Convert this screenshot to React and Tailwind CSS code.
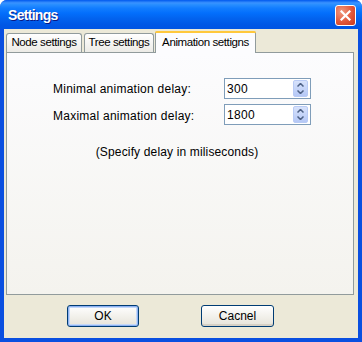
import React from "react";

function Spin() {
  return (
    <div className="w-[15px] h-[17px] rounded-[2px] border border-[#B9CBF5] bg-gradient-to-b from-[#D7E2FB] to-[#B5C8F6] flex flex-col items-center justify-center gap-[3px]">
      <svg width="7" height="4" viewBox="0 0 7 4"><path d="M0.5 3.5 L3.5 0.5 L6.5 3.5" fill="none" stroke="#4D6185" strokeWidth="1.5" /></svg>
      <svg width="7" height="4" viewBox="0 0 7 4"><path d="M0.5 0.5 L3.5 3.5 L6.5 0.5" fill="none" stroke="#4D6185" strokeWidth="1.5" /></svg>
    </div>
  );
}

function NumInput({ value }) {
  return (
    <div className="h-[21px] w-[87px] border border-[#7F9DB9] bg-white flex items-center justify-between pl-[2px] pr-[2px]">
      <span className="text-[12px] text-black leading-none tracking-[0.3px]">{value}</span>
      <Spin />
    </div>
  );
}

const tabBase =
  "h-[19px] border border-b-0 border-[#919B9C] rounded-t-[3px] bg-gradient-to-b from-white to-[#ECEBE6] flex items-center justify-center whitespace-nowrap text-[11.5px] tracking-[-0.4px]";

export default function App() {
  return (
    <div className="w-[362px] h-[342px] flex flex-col rounded-t-[7px] overflow-hidden bg-[#0A4FE0]" style={{ fontFamily: '"Liberation Sans", Arial, sans-serif' }}>
      {/* Title bar */}
      <div className="h-[29px] flex items-center justify-between pl-[8px] pr-[6px] bg-[linear-gradient(to_bottom,#0058EE_0%,#3A93FF_10%,#288EFF_16%,#127DFF_28%,#036FFC_45%,#0262EE_65%,#0057E5_85%,#0054E3_100%)]">
        <span className="text-white font-bold text-[14px] tracking-[-0.7px] [text-shadow:1px_1px_0_#0A1883] mt-[1px]">Settings</span>
        <div className="w-[21px] h-[21px] rounded-[3px] border border-white bg-[radial-gradient(circle_at_30%_30%,#F09A80_0%,#E2573A_55%,#C8381B_100%)] flex items-center justify-center mt-[2px]">
          <svg width="11" height="11" viewBox="0 0 11 11"><path d="M1.5 1.5 L9.5 9.5 M9.5 1.5 L1.5 9.5" stroke="white" strokeWidth="2.2" strokeLinecap="square" /></svg>
        </div>
      </div>
      {/* Body */}
      <div className="flex-1 mx-[4px] mb-[4px] bg-[#ECE9D8] flex flex-col pt-[2px] text-[12px] text-black">
        {/* Tabs */}
        <div className="flex items-end h-[21px] ml-[2px] relative z-10">
          <div className={`${tabBase} w-[76px] mr-[2px]`}>Node settings</div>
          <div className={`${tabBase} w-[70px] mr-[1px]`}>Tree settings</div>
          <div className="h-[22px] -mb-[1px] w-[101px] border border-b-0 border-[#919B9C] border-t-0 rounded-t-[3px] bg-[#FCFCFE] flex flex-col">
            <div className="h-[2px] bg-[#FFC83C] rounded-t-[3px] -mx-[1px]" />
            <div className="flex-1 flex items-center justify-center pb-[1px] whitespace-nowrap text-[11.5px] tracking-[-0.4px]">Animation settigns</div>
          </div>
        </div>
        {/* Panel */}
        <div className="h-[243px] ml-[2px] mr-[4px] border border-[#919B9C] bg-gradient-to-b from-[#FCFCFE] to-[#F4F3EE] flex flex-col">
          <div className="grid grid-cols-[171px_87px] gap-y-[5px] pl-[46px] pt-[25px] items-center">
            <span className="tracking-[0.25px] whitespace-nowrap">Minimal animation delay:</span>
            <NumInput value="300" />
            <span className="mt-[3px] tracking-[0.25px] whitespace-nowrap">Maximal animation delay:</span>
            <NumInput value="1800" />
          </div>
          <div className="mt-[18px] text-center pr-[6px] tracking-[0.15px]">(Specify delay in miliseconds)</div>
        </div>
        {/* Buttons */}
        <div className="flex mt-[10px] h-[22px]">
          <div className="ml-[63px] w-[72px] h-[22px] rounded-[3px] border border-[#003C74] bg-gradient-to-b from-white to-[#E6E3D9] shadow-[inset_0_0_0_1px_#8DB2F2,inset_0_0_0_2px_#C4D8F8] flex items-center justify-center">OK</div>
          <div className="ml-[62px] w-[73px] h-[22px] rounded-[3px] border border-[#003C74] bg-gradient-to-b from-white to-[#E6E3D9] shadow-[inset_0_-2px_0_#D6D0C5] flex items-center justify-center">Cacnel</div>
        </div>
      </div>
    </div>
  );
}
